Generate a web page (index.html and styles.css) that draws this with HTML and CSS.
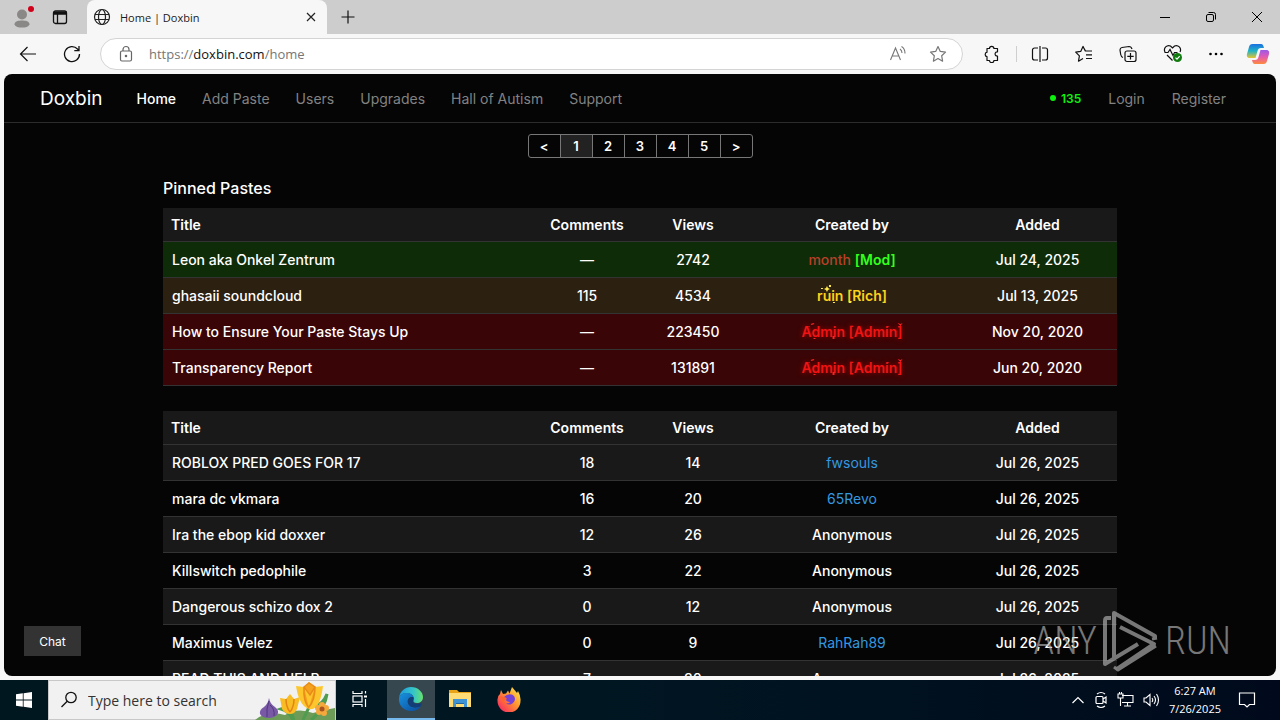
FILE: index.html
```html
<!DOCTYPE html>
<html lang="en">
<head>
<meta charset="utf-8">
<title>Home | Doxbin</title>
<link rel="stylesheet" href="styles.css">
</head>
<body>
<header class="tabs">
  <button class="ico profile" aria-label="Profile"><svg width="24" height="24" viewBox="0 0 24 24"><circle cx="11" cy="9.500" r="5" fill="#8a8886"/><path d="M3.500 19.500c0-3.500 4-4 7.500-4s7.500.5 7.500 4c-1 2.500-4 3-7.500 3s-6.500-.5-7.500-3z" fill="#8a8886"/><circle cx="20" cy="4" r="3" fill="#d0021b"/></svg></button>
  <button class="ico" aria-label="Tab actions"><svg width="16" height="16" viewBox="0 0 16 16" fill="none" stroke="#111" stroke-width="1.300"><rect x="1.500" y="2" width="13" height="12.500" rx="2"/><path d="M1.500 3.500h13M1.500 4.800h13" stroke-width="2"/><path d="M5.500 5v9"/></svg></button>
  <div class="tab">
    <svg width="18" height="18" viewBox="0 0 18 18" fill="none" stroke="#222" stroke-width="1.200"><circle cx="9" cy="9" r="7.500"/><ellipse cx="9" cy="9" rx="3.500" ry="7.500"/><path d="M2 6.500h14M2 11.500h14"/></svg>
    <span class="tab-title">Home | Doxbin</span>
    <button class="ico" aria-label="Close tab"><svg width="12" height="12" viewBox="0 0 12 12" stroke="#222" stroke-width="1.200"><path d="M2 2l8 8M10 2l-8 8"/></svg></button>
  </div>
  <button class="ico newtab" aria-label="New tab"><svg width="16" height="16" viewBox="0 0 16 16" stroke="#111" stroke-width="1.200"><path d="M8 1.500v13M1.500 8h13"/></svg></button>
  <div class="window-controls">
    <button class="ico" aria-label="Minimize"><svg width="12" height="12" viewBox="0 0 12 12" stroke="#000"><path d="M1 6.500h10"/></svg></button>
    <button class="ico" aria-label="Restore"><svg width="12" height="12" viewBox="0 0 12 12" fill="none" stroke="#000"><rect x="1.500" y="3.500" width="7" height="7" rx="1.500"/><path d="M3.500 1.500h5a2 2 0 0 1 2 2v5"/></svg></button>
    <button class="ico" aria-label="Close"><svg width="12" height="12" viewBox="0 0 12 12" stroke="#000"><path d="M1 1l10 10M11 1L1 11"/></svg></button>
  </div>
</header>
<div class="toolbar">
  <button class="ico" aria-label="Back"><svg width="18" height="18" viewBox="0 0 18 18" fill="none" stroke="#111" stroke-width="1.200"><path d="M17 9H1.500M8.500 2L1.500 9l7 7"/></svg></button>
  <button class="ico reload" aria-label="Reload"><svg width="18" height="18" viewBox="0 0 18 18" fill="none" stroke="#111" stroke-width="1.300"><path d="M16.500 9A7.500 7.500 0 1 1 14.500 4L16 5.500M16 1v4.700h-4.700"/></svg></button>
  <div class="address">
    <svg width="16" height="18" viewBox="0 0 16 18" fill="none" stroke="#666" stroke-width="1.200"><rect x="2.500" y="6" width="11" height="10" rx="1.500"/><path d="M5 6V4.500a3 3 0 0 1 6 0V6"/><circle cx="8" cy="11" r=".7" fill="#666"/></svg>
    <div class="url" aria-label="Address">https://<b>doxbin.com</b>/home</div>
    <button class="ico" aria-label="Read aloud"><svg width="18" height="18" viewBox="0 0 18 18" fill="none" stroke="#777" stroke-width="1.100"><path d="M1.500 15L6.500 3l5 12M3.200 11h6.600M11 4q2 1.500 2 4M12.500 1.500q3.500 2 3.500 7"/></svg></button>
    <button class="ico" aria-label="Favorite"><svg width="18" height="18" viewBox="0 0 18 18" fill="none" stroke="#777" stroke-width="1.200" stroke-linejoin="round"><path d="M9 1.500l2.300 4.900 5.200.7-3.800 3.700.9 5.400L9 13.600l-4.600 2.600.9-5.400-3.800-3.700 5.200-.7z"/></svg></button>
  </div>
  <div class="actions">
    <button class="ico" aria-label="Extensions"><svg width="18" height="18" viewBox="0 0 18 18" fill="none" stroke="#111" stroke-width="1.200"><path d="M4 3.500h2.500a2.200 2.200 0 0 1 4.400 0h3.600v3.300c-3.200-.4-3.200 4.600 0 4.200v4.500h-3.600a2.200 2.200 0 0 1-4.400 0H4v-3.800a2.300 2.300 0 0 1 0-4.500z" stroke-linejoin="round"/></svg></button>
    <span class="sep"></span>
    <button class="ico" aria-label="Split screen"><svg width="18" height="18" viewBox="0 0 18 18" fill="none" stroke="#111" stroke-width="1.200"><path d="M9 1v16M7 3H3.500a2 2 0 0 0-2 2v8a2 2 0 0 0 2 2H7M11 3h3.500a2 2 0 0 1 2 2v8a2 2 0 0 1-2 2H11"/></svg></button>
    <button class="ico" aria-label="Favorites"><svg width="18" height="18" viewBox="0 0 18 18" fill="none" stroke="#111" stroke-width="1.200" stroke-linejoin="round"><path d="M10.500 6L8 1.500 5.700 6.400l-5 .7 3.700 3.700-.9 5.400L8 13.600M8 1.500L10.300 6H17M11 9.800h6M11 13.500h6"/></svg></button>
    <button class="ico" aria-label="Collections"><svg width="18" height="18" viewBox="0 0 18 18" fill="none" stroke="#111" stroke-width="1.200"><rect x="6" y="6" width="11" height="10.500" rx="2"/><path d="M11.500 8v6.500M8.300 11.300h6.400M4 12.500C2.500 12 2 11 1.700 9.500L1 5c0-1.500.7-2.300 2-2.500l7-1c1.500 0 2.500.8 3 2.500"/></svg></button>
    <button class="ico essentials" aria-label="Browser essentials"><svg width="20" height="20" viewBox="0 0 20 20" fill="none" stroke="#111" stroke-width="1.200"><path d="M2 8C0 4 4 .5 7.500 2L9.500 4l2-2C15 .5 19 4 17 8M1.500 8.500H5L7 5.500l3 6 1.500-3h3M4 11l5.500 5.500"/><circle cx="14.500" cy="13.500" r="4.500" fill="#107c10" stroke="none"/><path d="M12.500 13.700l1.500 1.500 2.700-3" stroke="#fff"/></svg></button>
    <button class="ico" aria-label="Settings and more"><svg width="18" height="18" viewBox="0 0 18 18"><circle cx="3.500" cy="9" r="1.300"/><circle cx="9" cy="9" r="1.300"/><circle cx="14.500" cy="9" r="1.300"/></svg></button>
    <button class="ico" aria-label="Copilot"><svg width="24" height="22" viewBox="0 0 24 22"><defs><linearGradient id="ca" x2="0" y2="1"><stop stop-color="#1b6fe0"/><stop offset=".5" stop-color="#20b4c4"/><stop offset="1" stop-color="#e4c530"/></linearGradient><linearGradient id="cb" x2="0" y2="1"><stop stop-color="#9b57e8"/><stop offset=".5" stop-color="#e35bb2"/><stop offset="1" stop-color="#ff8a3c"/></linearGradient></defs><path d="M6.500 1H15c2 0 2.500 2 3 4h-3c-2 0-3 1-3.500 3L9.500 15H4c-3 0-3.500-2-3-4L3 4c.5-2 1.500-3 3.500-3z" fill="url(#ca)"/><path d="M17.500 21H9c-2 0-2.500-2-3-4h3c2 0 3-1 3.500-3l2-7H20c3 0 3.500 2 3 4l-2 7c-.5 2-1.500 3-3.500 3z" fill="url(#cb)"/></svg></button>
  </div>
</div>
<main class="page">
  <nav class="nav">
    <a class="brand" href="#">Doxbin</a>
    <a class="active" href="#">Home</a><a href="#">Add Paste</a><a href="#">Users</a><a href="#">Upgrades</a><a href="#">Hall of Autism</a><a href="#">Support</a>
    <div class="account"><span class="online">135</span><a href="#">Login</a><a href="#">Register</a></div>
  </nav>
  <div class="pager"><a href="#">&lt;</a><a class="current" href="#">1</a><a href="#">2</a><a href="#">3</a><a href="#">4</a><a href="#">5</a><a href="#">&gt;</a></div>
  <div class="content">
    <h1>Pinned Pastes</h1>
    <table class="pastes">
      <colgroup><col class="c-title"><col class="c-num"><col class="c-num"><col class="c-user"><col class="c-date"></colgroup>
      <thead><tr><th>Title</th><th>Comments</th><th>Views</th><th>Created by</th><th>Added</th></tr></thead>
      <tbody>
        <tr class="mod"><td>Leon aka Onkel Zentrum</td><td>—</td><td>2742</td><td><span class="u-month">month</span> <span class="u-mod">[Mod]</span></td><td>Jul 24, 2025</td></tr>
        <tr class="rich"><td>ghasaii soundcloud</td><td>115</td><td>4534</td><td><span class="u-rich">ruin [Rich]<svg class="sparks" viewBox="0 0 70 20" fill="#ffe94a"><path d="M4 3h2v1H4zM10 1l1 2 2 1-2 1-1 2-1-2-2-1 2-1zM12 0h2v2h-2zM16 17h2v1h-2zM32 16h2v2h-2z"/></svg></span></td><td>Jul 13, 2025</td></tr>
        <tr class="admin"><td>How to Ensure Your Paste Stays Up</td><td>—</td><td>223450</td><td><span class="u-admin">Admin [Admin]<svg class="sparks" viewBox="0 0 100 20" fill="#f22"><path d="M9 3l3-1 1 1-3 1zM7 5h1v1H7zM12 17h2v1h-2zM31 15h2v3h-2zM86 5h1v1h-1zM96 2l3 1 2-1-2 3z"/></svg></span></td><td>Nov 20, 2020</td></tr>
        <tr class="admin"><td>Transparency Report</td><td>—</td><td>131891</td><td><span class="u-admin">Admin [Admin]<svg class="sparks" viewBox="0 0 100 20" fill="#f22"><path d="M9 3l3-1 1 1-3 1zM7 5h1v1H7zM12 17h2v1h-2zM31 15h2v3h-2zM86 5h1v1h-1zM96 2l3 1 2-1-2 3z"/></svg></span></td><td>Jun 20, 2020</td></tr>
      </tbody>
    </table>
    <table class="pastes striped">
      <colgroup><col class="c-title"><col class="c-num"><col class="c-num"><col class="c-user"><col class="c-date"></colgroup>
      <thead><tr><th>Title</th><th>Comments</th><th>Views</th><th>Created by</th><th>Added</th></tr></thead>
      <tbody>
        <tr><td>ROBLOX PRED GOES FOR 17</td><td>18</td><td>14</td><td><a href="#">fwsouls</a></td><td>Jul 26, 2025</td></tr>
        <tr><td>mara dc vkmara</td><td>16</td><td>20</td><td><a href="#">65Revo</a></td><td>Jul 26, 2025</td></tr>
        <tr><td>Ira the ebop kid doxxer</td><td>12</td><td>26</td><td>Anonymous</td><td>Jul 26, 2025</td></tr>
        <tr><td>Killswitch pedophile</td><td>3</td><td>22</td><td>Anonymous</td><td>Jul 26, 2025</td></tr>
        <tr><td>Dangerous schizo dox 2</td><td>0</td><td>12</td><td>Anonymous</td><td>Jul 26, 2025</td></tr>
        <tr><td>Maximus Velez</td><td>0</td><td>9</td><td><a href="#">RahRah89</a></td><td>Jul 26, 2025</td></tr>
        <tr><td>READ THIS AND HELP</td><td>7</td><td>30</td><td>Anonymous</td><td>Jul 26, 2025</td></tr>
      </tbody>
    </table>
  </div>
  <button class="chat">Chat</button>
  <div class="watermark"><span>ANY</span><svg width="56" height="62" viewBox="0 0 56 62" fill="none" stroke="#b4b4b4" stroke-width="4" stroke-linejoin="round"><path d="M11 50V3L52 26v3M17 17l34 17-37 25M8 8H4q-2 0-2 3v43L35 34"/><path d="M54 28l-5 1M11 57l4 3 38-24" stroke-width="3"/></svg><span>RUN</span></div>
</main>
<footer class="taskbar">
  <button class="start" aria-label="Start"><svg width="16" height="16" viewBox="0 0 16 16" fill="#fff"><path d="M0 2.300L6.800 1.300V7.600H0zM7.600 1.200L16 0v7.600H7.600zM0 8.400h6.800v6.300L0 13.700zM7.600 8.400H16V16l-8.400-1.200z"/></svg></button>
  <div class="search">
    <svg width="18" height="18" viewBox="0 0 18 18" fill="none" stroke="#111" stroke-width="1.300"><circle cx="11" cy="6.500" r="5.200"/><path d="M7.200 10.200L1.500 16"/></svg>
    <input type="text" aria-label="Search" placeholder="Type here to search">
    <svg class="flowers" width="80" height="39" viewBox="0 0 80 39"><path d="M0 39q12-10 30-5 12-8 28-2 10-3 22-5v12z" fill="#6c9c58"/><path d="M35 28l4 11M56 22l-8 17M60 25q8-2 12-12-2 15-16 26M38 30q-6-4-12-2 8 2 12 11" stroke="#4f9b50" stroke-width="3" fill="none"/><path d="M14 17q1 6 6 9 5 4 2 8-3 3-8 3-7 0-9-4-1-4 4-7 4-3 5-9z" fill="#7959a6"/><path d="M14 20q-3 8-2 16M15 24q5 4 4 11" stroke="#51377e" fill="none"/><path d="M25 17l6 1 4-5 4 5 6-2-3 12q-2 5-7 5t-8-5z" fill="#f8bc24"/><path d="M31 18q0 8 4 13M39 18q0 8-4 13" stroke="#e38414" stroke-width="1.500" fill="none"/><path d="M41 5l8 1 5-5 6 5 8-1q-2 16-7 21-6 5-12-1Q43 19 41 5z" fill="#fcc62c"/><path d="M49 6q-1 14 5 21M60 6q0 13-6 20M49 6l5-4 6 4-5 8z" stroke="#e98b18" stroke-width="1.500" fill="#f4a21d"/><g fill="#f5a83b"><circle cx="67" cy="24" r="3"/><circle cx="71" cy="27" r="3"/><circle cx="69" cy="32" r="3"/><circle cx="64" cy="31" r="3"/><circle cx="63" cy="27" r="3"/></g><circle cx="67" cy="28" r="2.500" fill="#a95420"/></svg>
  </div>
  <button class="task" aria-label="Task view"><svg width="18" height="18" viewBox="0 0 18 18" fill="none" stroke="#fff" stroke-width="1.200"><path d="M2 1v2.500h9V1M2 17v-2.500h9V17M14.500 1v2.500M14.500 9v8"/><rect x="2" y="6" width="9" height="6"/><path d="M13 5.500h3v2h-3z" fill="#fff" stroke="none"/></svg></button>
  <button class="task open" aria-label="Edge"><svg width="26" height="26" viewBox="0 0 26 26"><defs><linearGradient id="ea" x2="1"><stop stop-color="#1d9ae0"/><stop offset=".6" stop-color="#35c5c8"/><stop offset="1" stop-color="#67e16e"/></linearGradient><linearGradient id="eb" x2="1" y2="1"><stop stop-color="#1793df"/><stop offset="1" stop-color="#0c4a9c"/></linearGradient></defs><path d="M1 12C2 5 7 1 13 1c7 0 12 5 12 10 0 4-3 6-6 6-3 0-4-1-3.500-2.500C17 10 13 7 9 7c-4 0-7 2-8 5z" fill="url(#ea)"/><path d="M1 12c1-3 4-5 8-5 3 0 6 2 6.500 4.500C12 10 9 13 10 17c1 4 6 6 13 3-3 4-6 5-10 5C6 25 0 19 1 12z" fill="url(#eb)"/><path d="M10 17c-1-3 1-6 4-6 1 0 1.500.5 1.800 1-1 2-1.500 6 3.200 6 2 0 4-1 4.500-1 .5.500 0 1.500-.5 3-6 3-12 1-13-3z" fill="#123f78"/></svg></button>
  <button class="task" aria-label="File Explorer"><svg width="22" height="20" viewBox="0 0 22 20"><path d="M0 1h8l2 2h12v6H0z" fill="#e8a317"/><path d="M0 4h22v14H0z" fill="#fddc75"/><path d="M4 10h14v8h-3v-4H7v4H4z" fill="#3d93d3"/><path d="M7 14h8v1H7z" fill="#23669d"/></svg></button>
  <button class="task" aria-label="Firefox"><svg width="24" height="25" viewBox="0 0 24 25"><defs><linearGradient id="fa" x1="1" x2="0" y2="1"><stop stop-color="#fff04a"/><stop offset=".45" stop-color="#ff9330"/><stop offset="1" stop-color="#f5156c"/></linearGradient></defs><path d="M4 3l2 4 3-.5 2-3 1.500 3L15 0l5 6 1-2q3 5 2.500 10A11.500 11.500 0 0 1 .5 14Q0 9 3 7z" fill="url(#fa)"/><path d="M7 10q4-4 9-2 4 4 0 8-4 3-7 0 3 1 4-1-4 0-6-5z" fill="#7542d7"/><path d="M3 9l4 1q2 0 3 2l-3 2q1 4 5 4-7 1-9-9z" fill="#ff642f"/></svg></button>
  <div class="tray">
    <button class="ico" aria-label="Hidden icons"><svg width="14" height="14" viewBox="0 0 14 14" fill="none" stroke="#fff" stroke-width="1.200"><path d="M1.500 10L7 4.500l5.500 5.500"/></svg></button>
    <button class="ico" aria-label="Meet now"><svg width="14" height="18" viewBox="0 0 14 18" fill="none" stroke="#fff" stroke-width="1.200"><rect x="2" y="5.500" width="7" height="7" rx="1"/><path d="M9 8l3-2v6L9 10M3 3q4-3 8 0M3 15q4 3 8 0"/></svg></button>
    <button class="ico" aria-label="Network"><svg width="17" height="16" viewBox="0 0 17 16" fill="none" stroke="#fff" stroke-width="1.100"><path d="M5 3.500h11v7H5M10.500 10.500v3M7 14h7M3.500 6v8M1 2v4h5V2zM2.500 0v2M4.500 0v2"/></svg></button>
    <button class="ico" aria-label="Volume"><svg width="17" height="16" viewBox="0 0 17 16" fill="none" stroke="#fff" stroke-width="1.100"><path d="M1 6h2l4-3.500v11L3 10H1zM9 6q1.500 2 0 4M11 4q3 4 0 8M13.500 2q4 6 0 12"/></svg></button>
    <div class="clock"><span>6:27 AM</span><span>7/26/2025</span></div>
    <button class="ico" aria-label="Notifications"><svg width="18" height="18" viewBox="0 0 18 18" fill="none" stroke="#fff" stroke-width="1.200"><path d="M1.500 2h15v11.500h-5L9 16l-2.500-2.500h-5z"/></svg></button>
  </div>
</footer>
</body>
</html>
```
FILE: styles.css
```css
* { box-sizing: border-box; }
body {
  margin: 0;
  height: 100vh;
  display: flex;
  flex-direction: column;
  background: #f7f7f7;
  font-family: "Open Sans", "Noto Sans", sans-serif;
  font-size: 11px;
  overflow: hidden;
}
button { border: 0; padding: 0; background: none; font: inherit; color: inherit; }
a { color: inherit; text-decoration: none; }
svg { display: block; flex: none; }
.ico { display: flex; align-items: center; justify-content: center; flex: none; }

.tabs { display: flex; align-items: center; height: 34px; flex: none; background: #cdcdcd; padding-left: 11px; }
.profile { margin-right: 17px; }
.tab {
  display: flex;
  align-items: center;
  align-self: stretch;
  gap: 9px;
  width: 240px;
  margin-left: 19px;
  padding: 0 10px 0 6px;
  background: #f7f7f7;
  border-radius: 8px 8px 0 0;
}
.tab-title { flex: 1; color: #1b1b1b; }
.newtab { margin-left: 13px; }
.window-controls { display: flex; gap: 34px; margin-left: auto; padding-right: 17px; }

.toolbar { display: flex; align-items: center; height: 40px; flex: none; padding: 0 10px 0 19px; }
.reload { margin-left: 26px; }
.address {
  flex: 1;
  display: flex;
  align-items: center;
  height: 32px;
  margin: 0 20px 0 19px;
  padding: 0 15px 0 17px;
  background: #fff;
  border: 1px solid #d4d4d4;
  border-radius: 16px;
}
.url { flex: 1; margin-left: 15px; font-size: 13px; color: #767676; }
.url b { font-weight: 400; color: #111; }
.address .ico + .ico { margin-left: 22px; }
.actions { display: flex; align-items: center; gap: 26px; }
.actions .ico:first-child { margin-right: -11px; }
.sep { width: 1px; height: 16px; background: #cfcfcf; margin-right: -12px; }
.essentials { margin-right: -2px; }
.actions .ico:last-child { margin-left: -5px; }

.page {
  position: relative;
  flex: 1;
  min-height: 0;
  margin: 0 4px 4px;
  border-radius: 8px;
  overflow: hidden;
  background: #050505;
  color: #fff;
  font-family: Inter, sans-serif;
  font-size: 14px;
}
.nav {
  display: flex;
  align-items: center;
  gap: 26px;
  height: 49px;
  padding: 0 50px 0 36px;
  border-bottom: 1px solid #2c2c2c;
  color: #828282;
}
.nav .brand { font-size: 19px; color: #fff; margin-right: 8px; }
.nav .active { color: #fff; font-weight: 500; }
.account { display: flex; align-items: center; gap: 27px; margin-left: auto; }
.online { display: flex; align-items: center; gap: 5px; color: #0df20d; font-size: 12px; font-weight: 600; }
.online::before { content: ""; width: 6px; height: 6px; border-radius: 50%; background: #0df20d; }

.pager { display: flex; width: max-content; margin: 11px auto 0; border: 1px solid #777; border-radius: 3px; font-size: 13px; font-weight: 600; }
.pager a { width: 32px; line-height: 22px; text-align: center; border-left: 1px solid #777; }
.pager a:first-child { width: 31px; border-left: 0; }
.pager .current { background: #222; }

.content { width: 75%; margin: 0 auto; }
h1 { margin: 18px 0 8px; font-size: 16px; font-weight: 500; line-height: 24px; }
.pastes { width: 100%; table-layout: fixed; border-collapse: separate; border-spacing: 0; margin-bottom: 25px; text-align: center; font-weight: 500; }
.pastes th { height: 34px; padding: 0; background: #191919; font-weight: 600; border-bottom: 1px solid #333; }
.pastes td { height: 36px; padding: 0; border-bottom: 1px solid #333; }
.pastes th:first-child { text-align: left; padding-left: 8px; }
.pastes td:first-child { text-align: left; padding-left: 9px; }
.c-num { width: calc(100% / 9); }
.c-user { width: calc(200% / 9); }
.c-date { width: calc(100% / 6); }
.mod { background: #0f2c09; }
.rich { background: #2c2011; }
.admin { background: #3a0506; }
.striped tbody tr:nth-child(odd) { background: #191919; }
.pastes a { color: #3498e0; font-weight: 400; }
.u-month { color: #b8402a; }
.u-mod { color: #33ff1c; font-weight: 600; }
.u-rich, .u-admin { position: relative; display: inline-block; font-weight: 600; }
.u-rich { color: #ffd21c; }
.u-admin { color: #f01414; text-shadow: 0 0 5px #a00; }
.sparks { position: absolute; top: -2px; left: 0; width: 100%; height: 20px; }

.chat { position: absolute; left: 20px; bottom: 20px; width: 57px; height: 30px; background: #333; font-size: 12px; }
.watermark {
  position: absolute;
  right: 45px;
  bottom: 4px;
  display: flex;
  align-items: center;
  gap: 6px;
  color: #b4b4b4;
  opacity: .65;
  font-family: "Roboto Condensed", "Liberation Sans Narrow", "Liberation Sans", sans-serif;
  font-size: 38px;
  font-weight: 300;
}

.taskbar { display: flex; align-items: center; height: 40px; flex: none; background: linear-gradient(90deg, #001720, #001722 45%, #000a1c); color: #fff; }
.start { display: flex; align-items: center; justify-content: center; width: 48px; height: 40px; }
.search { display: flex; align-items: center; width: 288px; height: 40px; padding-left: 11px; background: #f1f1f1; border: 1px solid #c8c8c8; }
.search input { flex: 1; min-width: 0; border: 0; padding: 0; margin-left: 10px; background: none; font: inherit; font-size: 14px; }
.search input::placeholder { color: #333; opacity: 1; }
.task { display: flex; align-items: center; justify-content: center; width: 48px; height: 40px; border-bottom: 2px solid transparent; }
.task + .task { margin-left: 1px; }
.task + .open { margin-left: 3px; background: #37474f; border-color: #76b9ed; }
.tray { display: flex; align-items: center; gap: 9px; margin-left: auto; padding-right: 24px; }
.clock { display: flex; flex-direction: column; align-items: center; line-height: 18px; margin-right: 8px; }
```
